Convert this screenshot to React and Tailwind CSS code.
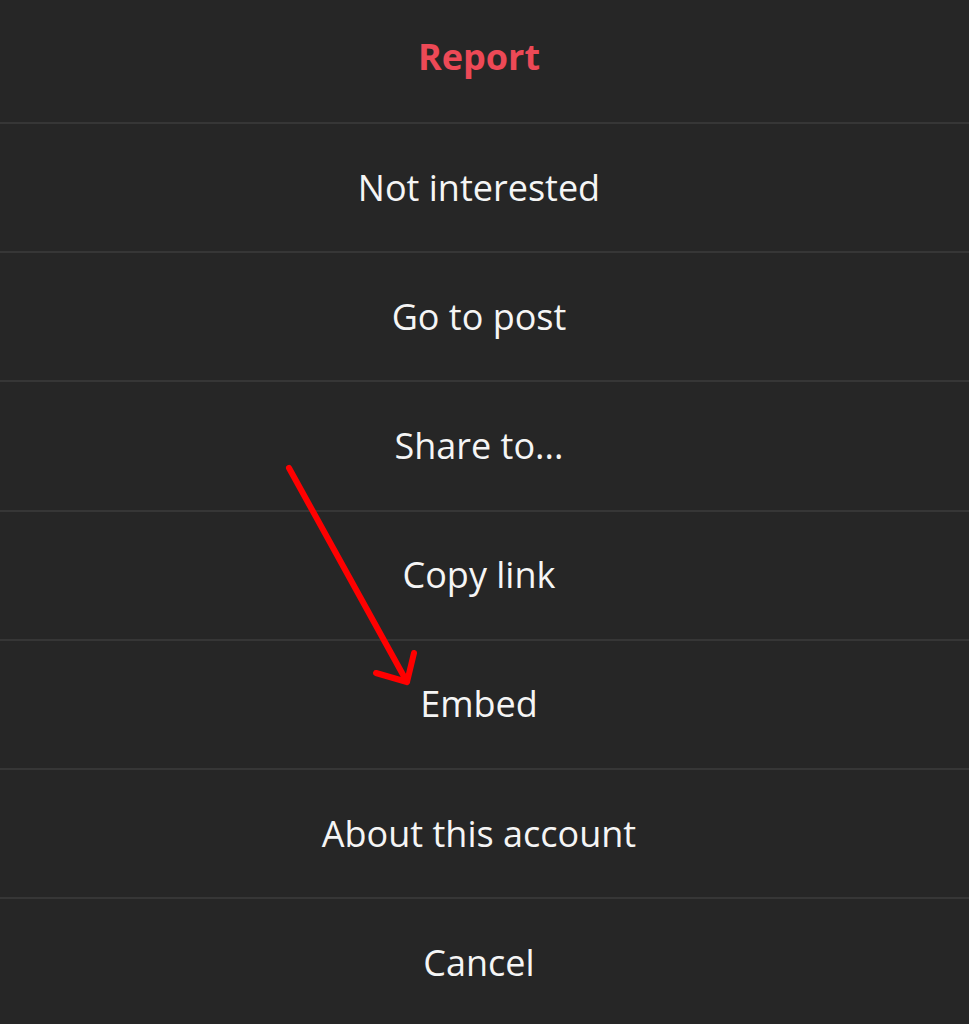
import React from "react";

const items = [
  "Not interested",
  "Go to post",
  "Share to...",
  "Copy link",
  "Embed",
  "About this account",
];

export default function App() {
  return (
    <div
      className="relative w-[969px] h-[1024px] overflow-hidden bg-[#262626] text-[#f5f5f5]"
      style={{ fontFamily: '"Open Sans", "Noto Sans", sans-serif' }}
    >
      <div className="flex flex-col">
        <div className="h-[124px] border-b-2 border-[#363636] flex items-center justify-center pr-[11px] pb-[8px]">
          <span className="text-[36px] font-bold text-[#ed4956]">Report</span>
        </div>
        {items.map((t) => (
          <div
            key={t}
            className="h-[129.2px] border-b-2 border-[#363636] flex items-center justify-center pr-[11px]"
          >
            <span className="text-[36px]">{t}</span>
          </div>
        ))}
        <div className="h-[127px] flex items-center justify-center pr-[11px]">
          <span className="text-[36px]">Cancel</span>
        </div>
      </div>
      <svg
        className="absolute left-0 top-0 pointer-events-none"
        width="969"
        height="1024"
        viewBox="0 0 969 1024"
      >
        <path
          d="M289 468 L407 682 M376 673 L407 682 L414 653"
          stroke="#ff0000"
          strokeWidth="6"
          strokeLinecap="round"
          strokeLinejoin="round"
          fill="none"
        />
      </svg>
    </div>
  );
}
